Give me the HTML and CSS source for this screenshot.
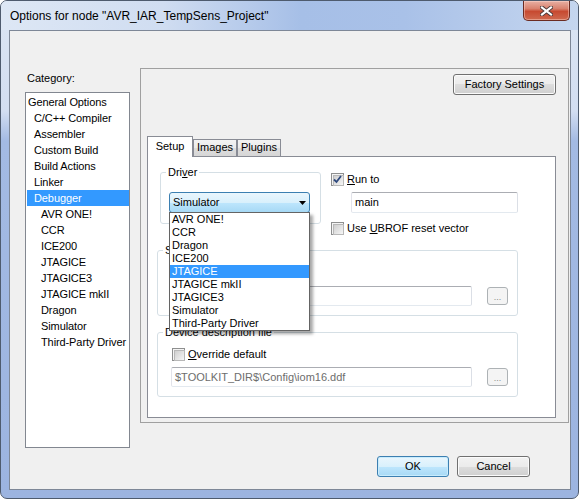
FILE: index.html
```html
<!DOCTYPE html>
<html>
<head>
<meta charset="utf-8">
<link rel="stylesheet" href="styles.css">
</head>
<body>
<div class="window">
  <div class="titlebar">
    <span class="title">Options for node "AVR_IAR_TempSens_Project"</span>
    <div class="close">
      <svg width="13" height="10" viewBox="0 0 13 10">
        <path d="M2,1.5 L11,8.5 M11,1.5 L2,8.5" stroke="#4b3a3a" stroke-width="4" stroke-linecap="square" fill="none"/>
        <path d="M2,1.5 L11,8.5 M11,1.5 L2,8.5" stroke="#ffffff" stroke-width="2.2" stroke-linecap="square" fill="none"/>
      </svg>
    </div>
  </div>
  <div class="client">
    <div class="main">
      <div class="catcol">
        <div class="catlabel">Category:</div>
        <div class="catlist">
          <div class="item l0">General Options</div>
          <div class="item l1">C/C++ Compiler</div>
          <div class="item l1">Assembler</div>
          <div class="item l1">Custom Build</div>
          <div class="item l1">Build Actions</div>
          <div class="item l1">Linker</div>
          <div class="item l1 sel">Debugger</div>
          <div class="item l2">AVR ONE!</div>
          <div class="item l2">CCR</div>
          <div class="item l2">ICE200</div>
          <div class="item l2">JTAGICE</div>
          <div class="item l2">JTAGICE3</div>
          <div class="item l2">JTAGICE mkII</div>
          <div class="item l2">Dragon</div>
          <div class="item l2">Simulator</div>
          <div class="item l2">Third-Party Driver</div>
        </div>
      </div>
      <div class="panel">
        <div class="factory-row">
          <div class="btn factory">Factory Settings</div>
        </div>
        <div class="tabs">
          <div class="tab active t-setup">Setup</div>
          <div class="tab t-images">Images</div>
          <div class="tab t-plugins">Plugins</div>
        </div>
        <div class="tabbody">
          <div class="row1">
            <div class="group driver">
              <span class="glabel">Dri<u>v</u>er</span>
              <div class="combo">
                <span class="combo-text">Simulator</span>
                <svg class="arrow" width="7" height="4" viewBox="0 0 7 4"><path d="M0,0 L7,0 L3.5,4 Z" fill="#000"/></svg>
                <div class="dropdown">
                  <div class="ditem">AVR ONE!</div>
                  <div class="ditem">CCR</div>
                  <div class="ditem">Dragon</div>
                  <div class="ditem">ICE200</div>
                  <div class="ditem dsel">JTAGICE</div>
                  <div class="ditem">JTAGICE mkII</div>
                  <div class="ditem">JTAGICE3</div>
                  <div class="ditem">Simulator</div>
                  <div class="ditem">Third-Party Driver</div>
                </div>
              </div>
            </div>
            <div class="runcol">
              <div class="check-row">
                <span class="cb checked">
                  <svg width="11" height="11" viewBox="0 0 11 11"><path d="M2,5.5 L4.5,8 L9,2" stroke="#2f4a7e" stroke-width="1.8" fill="none"/></svg>
                </span>
                <span><u>R</u>un to</span>
              </div>
              <div class="textbox runinput">main</div>
              <div class="check-row ubrof">
                <span class="cb"></span>
                <span>Use <u>U</u>BROF reset vector</span>
              </div>
            </div>
          </div>
          <div class="group g2">
            <span class="glabel">S</span>
            <div class="check-row inner-check">
              <span class="cb"></span>
            </div>
            <div class="input-row">
              <div class="textbox wide"></div>
              <div class="dots">...</div>
            </div>
          </div>
          <div class="group g3">
            <span class="glabel">Device description file</span>
            <div class="check-row inner-check">
              <span class="cb"></span>
              <span><u>O</u>verride default</span>
            </div>
            <div class="input-row ir3">
              <div class="textbox wide disabled">$TOOLKIT_DIR$\Config\iom16.ddf</div>
              <div class="dots">...</div>
            </div>
          </div>
        </div>
      </div>
    </div>
    <div class="footer">
      <div class="btn ok">OK</div>
      <div class="btn cancel">Cancel</div>
    </div>
  </div>
</div>
</body>
</html>
```

FILE: styles.css
```css
* { box-sizing: border-box; }

body {
  margin: 0;
  background: #ffffff;
  font-family: "Liberation Sans", Arial, sans-serif;
  font-size: 11px;
  color: #000;
}

.window {
  width: 579px;
  height: 499px;
  border: 1px solid #4e5b6e;
  border-radius: 7px;
  overflow: hidden;
  background: linear-gradient(to bottom, #dbe5f3 0px, #d3def1 110px, #a3bae3 140px, #9cb4e0 100%);
  display: flex;
  flex-direction: column;
}

.titlebar {
  height: 29px;
  flex: none;
  display: flex;
  align-items: flex-start;
  background: linear-gradient(to right, #dde7f5 0%, #d0ddf1 28%, #a6bfe7 52%, #a9c1e8 70%, #c5d6ef 100%);
}

.title {
  margin: 8px 0 0 9px;
  font-size: 12px;
  line-height: 15px;
  color: #000;
}

.close {
  margin-left: auto;
  margin-right: 8px;
  width: 47px;
  height: 20px;
  border: 1px solid #6b2b22;
  border-top: none;
  border-radius: 0 0 5px 5px;
  background: linear-gradient(to bottom, #e8b0a4 0%, #d9826f 40%, #c74a31 55%, #cf6a50 100%);
  box-shadow: inset 0 0 0 1px rgba(255, 220, 210, 0.45);
  display: flex;
  align-items: center;
  justify-content: center;
}

.client {
  flex: none;
  margin-left: 8px;
  width: 562px;
  height: 460px;
  border: 1px solid #7d8797;
  background: #f0f0f0;
  display: flex;
  flex-direction: column;
}

.main {
  display: flex;
  align-items: flex-start;
}

.catcol {
  margin: 41px 0 0 15px;
  width: 105px;
}

.catlabel {
  line-height: 13px;
  margin-left: 2px;
}

.catlist {
  margin-top: 7px;
  height: 356px;
  border: 1px solid #828790;
  background: #fff;
  padding: 1px 0 0 1px;
}

.item {
  height: 16px;
  line-height: 16px;
  white-space: nowrap;
  letter-spacing: -0.1px;
}
.l0 { padding-left: 1px; }
.l1 { padding-left: 7px; }
.l2 { padding-left: 14px; }
.sel { background: #3399ff; color: #fff; }

.panel {
  margin: 37px 0 0 10px;
  width: 429px;
  height: 355px;
  border: 1px solid #a0a0a0;
  display: flex;
  flex-direction: column;
}

.factory-row {
  display: flex;
  justify-content: flex-end;
  padding: 5px 12px 0 0;
}

.btn {
  height: 21px;
  border: 1px solid #707070;
  border-radius: 3px;
  background: linear-gradient(to bottom, #f2f2f2 0%, #ebebeb 50%, #dddddd 50%, #cfcfcf 100%);
  box-shadow: inset 0 0 0 1px #fbfbfb;
  display: flex;
  align-items: center;
  justify-content: center;
  line-height: 13px;
}
.factory { width: 103px; }

.tabs {
  display: flex;
  align-items: flex-end;
  margin: 41px 0 0 6px;
  height: 20px;
  position: relative;
  z-index: 1;
}

.tab {
  height: 17px;
  border: 1px solid #898c95;
  border-bottom: none;
  background: linear-gradient(to bottom, #f3f3f3 0%, #ebebeb 50%, #dedede 50%, #d6d6d6 100%);
  line-height: 15px;
  text-align: center;
}
.tab.active {
  height: 21px;
  margin-bottom: -1px;
  background: #ffffff;
  line-height: 17px;
  padding-top: 1px;
}
.t-setup { width: 46px; }
.t-images { width: 44px; }
.t-plugins { width: 44px; }

.tabbody {
  margin-left: 6px;
  width: 409px;
  height: 262px;
  border: 1px solid #898c95;
  background: #ffffff;
}

.row1 {
  display: flex;
  align-items: flex-start;
}

.group {
  border: 1px solid #d5dfe5;
  border-radius: 3px;
}

.glabel {
  display: block;
  width: max-content;
  margin: -7px 0 0 5px;
  padding: 0 2px;
  line-height: 13px;
  background: #ffffff;
}

.driver {
  margin: 15px 0 0 12px;
  width: 161px;
  height: 52px;
}

.combo {
  position: relative;
  margin: 13px 0 0 8px;
  width: 141px;
  height: 21px;
  border: 1px solid #3c7fb1;
  border-radius: 3px;
  background: linear-gradient(to bottom, #eaf6fd 0%, #d9f0fc 50%, #bee6fd 50%, #a7d9f5 100%);
  display: flex;
  align-items: center;
  padding-left: 3px;
}
.combo-text { line-height: 13px; }
.arrow { margin-left: auto; margin-right: 3px; }

.dropdown {
  position: absolute;
  z-index: 10;
  left: -1px;
  top: 19px;
  width: 141px;
  border: 1px solid #646464;
  background: #ffffff;
  box-shadow: 3px 3px 3px rgba(0, 0, 0, 0.35);
}
.ditem {
  height: 13px;
  line-height: 13px;
  padding-left: 2px;
  white-space: nowrap;
}
.dsel { background: #3399ff; color: #fff; }

.runcol {
  margin: 16px 0 0 10px;
}

.check-row {
  display: flex;
  align-items: center;
  height: 13px;
  gap: 3px;
  line-height: 13px;
  white-space: nowrap;
}

.cb {
  flex: none;
  width: 13px;
  height: 13px;
  border: 1px solid #8e8f8f;
  background: #f4f4f4;
  padding: 1px;
  position: relative;
  display: block;
}
.cb::before {
  content: "";
  display: block;
  width: 9px;
  height: 9px;
  border: 1px solid #b8b8b8;
  background: linear-gradient(135deg, #cfcfcf 0%, #e6e6e6 60%, #f6f6f6 100%);
}
.cb svg {
  position: absolute;
  left: 0;
  top: 0;
}

.textbox {
  border: 1px solid #abadb3;
  border-color: #abadb3 #dbdfe6 #e3e9ef #e2e3ea;
  border-radius: 2px;
  background: #ffffff;
  padding-left: 3px;
  display: flex;
  align-items: center;
  line-height: 13px;
}
.runinput {
  margin: 6px 0 0 20px;
  width: 167px;
  height: 21px;
}
.ubrof { margin-top: 9px; }

.g2 {
  margin: 15px 0 0 9px;
  width: 361px;
  height: 66px;
}
.g3 {
  margin: 16px 0 0 9px;
  width: 361px;
  height: 65px;
}

.inner-check {
  margin: 9px 0 0 14px;
}

.input-row {
  display: flex;
  align-items: center;
  margin: 7px 0 0 13px;
}
.ir3 { margin-top: 6px; }

.wide {
  width: 301px;
  height: 20px;
}
.disabled {
  color: #6d6d6d;
}

.dots {
  margin-left: 15px;
  width: 21px;
  height: 18px;
  border: 1px solid #adb2b5;
  border-radius: 3px;
  background: #f4f4f4;
  color: #8d8d8d;
  font-size: 9px;
  display: flex;
  align-items: center;
  justify-content: center;
  line-height: 9px;
  padding-top: 3px;
}

.footer {
  display: flex;
  justify-content: flex-end;
  gap: 8px;
  margin-top: 8px;
  padding-right: 40px;
}
.ok {
  width: 72px;
  border-color: #3c7fb1;
  background: linear-gradient(to bottom, #eaf6fd 0%, #d9f0fc 50%, #bee6fd 50%, #a7d9f5 100%);
  box-shadow: inset 0 0 0 1px #c8ecfd;
}
.cancel { width: 73px; }
```
